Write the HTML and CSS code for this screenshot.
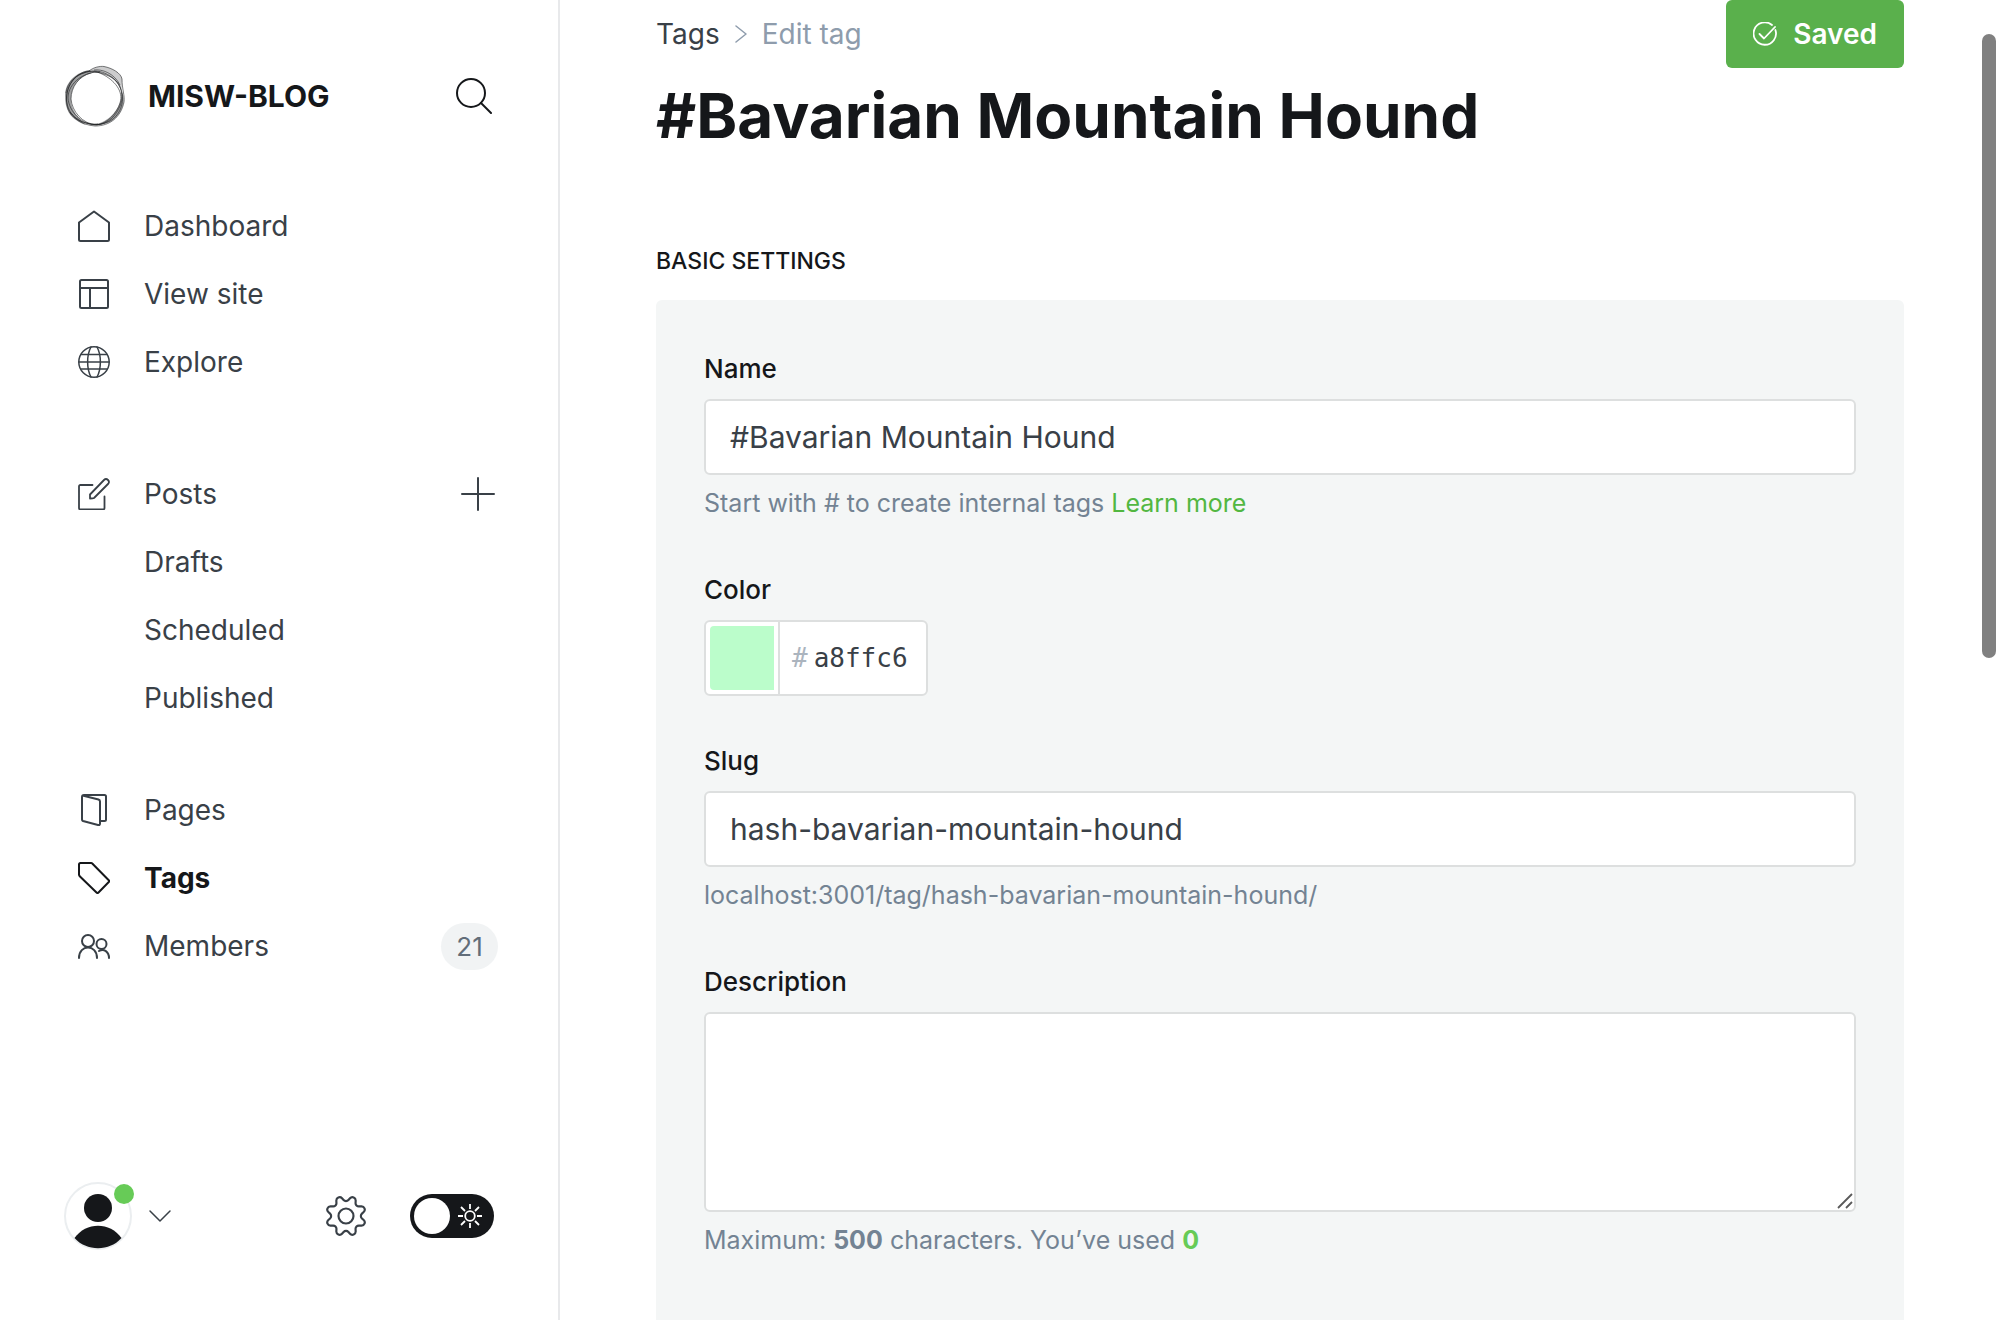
FILE: index.html
```html
<!DOCTYPE html>
<html lang="en">
<head>
<meta charset="utf-8">
<meta name="viewport" content="width=device-width, initial-scale=1">
<title>Edit tag - MISW-BLOG</title>
<link rel="stylesheet" href="styles.css">
</head>
<body>
<div class="app">
  <aside class="sidebar">
    <header class="brand">
      <svg class="brand-logo" viewBox="0 0 62 62" fill="none" stroke="#15171a" aria-hidden="true">
        <path fill="#15171a" fill-opacity=".42" stroke="none" d="M26 5C12 7 1 17 1 31C1 37 2 43 5 48C9 54 16 58 22 60C14 53 7 45 7 34C7 22 15 11 27 8Z"/>
        <path fill="#15171a" fill-opacity=".22" stroke="none" d="M25 6C30 2 36 1 40 1.500C48 3 57 8 58 14C58 19 58 23 57 26C54 16 45 10 36 8Z"/>
        <path fill="#15171a" fill-opacity=".42" stroke="none" d="M57 26C60 30 61 36 58 43C54 53 47 58 36 60L27 60C40 59 49 51 54 42C57 36 58 31 57 26Z"/>
        <g stroke-width=".7" stroke-opacity=".8">
          <path d="M25 6C30 2 36 1 40 1.500C48 3 57 8 58 14C58 24 61 31 60 37C57 52 46 61 31 61C17 60 7 52 4 44C-2 26 10 7 25 6Z"/>
          <path d="M20 8C34 2 50 10 56 22C62 34 57 50 46 56C34 63 15 59 7 48C-3 33 5 12 20 8Z"/>
          <path d="M27 8C15 11 7 22 7 34C8 46 18 59 33 60C44 58 53 48 56 38C60 26 50 15 38 9C34 7 30 6 27 8Z"/>
          <path d="M36 7C22 6 4 17 4 33C5 47 18 59 31 60C46 59 52 50 56 41C60 32 58 18 47 12C41 9 30 5 22 7"/>
          <path d="M30 5C38 4 50 8 56 20M2 28C3 18 11 10 22 7M6 47C12 56 23 60 34 59"/>
        </g>
      </svg>
      <span class="brand-name">MISW-BLOG</span>
      <button class="icon-button" type="button" aria-label="Search">
        <svg width="36" height="36" viewBox="0 0 36 36" fill="none" stroke="#15171a" stroke-width="2" stroke-linecap="round"><circle cx="15" cy="15" r="14"/><path d="M25 25L35 35"/></svg>
      </button>
    </header>

    <nav class="nav">
      <ul class="nav-group">
        <li class="nav-row"><a class="nav-link" href="#dashboard">
          <svg class="nav-icon" viewBox="0 0 32 32"><path d="M16 1.500L31 12.500V29.500Q31 31 29.500 31H2.500Q1 31 1 29.500V12.500Z"/></svg>Dashboard</a></li>
        <li class="nav-row"><a class="nav-link" href="#site">
          <svg class="nav-icon" viewBox="0 0 32 32"><rect x="2" y="2" width="28" height="28" rx="1.500"/><path d="M2 10H30M12 10V30"/></svg>View site</a></li>
        <li class="nav-row"><a class="nav-link" href="#explore">
          <svg class="nav-icon nav-icon-fine" viewBox="0 0 32 32"><circle cx="16" cy="16" r="15.200"/><path d="M1 16H31M3 8.500H29M3 23H29M13 1C8.500 9 8.500 23 13 31M19 1C23.500 9 23.500 23 19 31"/></svg>Explore</a></li>
      </ul>
      <ul class="nav-group nav-posts">
        <li class="nav-row"><a class="nav-link" href="#posts">
          <svg class="nav-icon nav-icon-pen" viewBox="0 0 32 32"><path d="M14.500 7H2.500Q1 7 1 8.500V30Q1 31.500 2.500 31.500H25Q26.500 31.500 26.500 30V18.500M12 20.500V16.500L26 2Q28 0 30 2T30 6L16 20Q15 20.500 12 20.500Z"/></svg>Posts</a>
          <button class="icon-button" type="button" aria-label="New post">
            <svg width="34" height="34" viewBox="0 0 34 34" fill="none" stroke="#394047" stroke-width="2" stroke-linecap="round"><path d="M17 1V33M1 17H33"/></svg>
          </button></li>
        <li class="nav-row"><a class="nav-link nav-sub" href="#drafts">Drafts</a></li>
        <li class="nav-row"><a class="nav-link nav-sub" href="#scheduled">Scheduled</a></li>
        <li class="nav-row"><a class="nav-link nav-sub" href="#published">Published</a></li>
      </ul>
      <ul class="nav-group nav-manage">
        <li class="nav-row"><a class="nav-link" href="#pages">
          <svg class="nav-icon" viewBox="0 0 32 32"><path d="M4.500 1.500L20.500 5.500Q22 6 22 7.500V29.500Q22 31.500 20 31L5 27Q4 26.500 4 25.500V3Q4 1 6 1H26.500Q28 1 28 2.500V25.500Q28 27 26.500 27H22"/></svg>Pages</a></li>
        <li class="nav-row"><a class="nav-link nav-active" href="#tags" aria-current="page">
          <svg class="nav-icon" viewBox="0 0 32 32"><path d="M2.500 1H13Q14 1 14.500 1.800L31 18.500Q31.500 19 31 19.800L20.500 30.500Q19.500 31.500 18.500 30.500L2 14.500Q1 13.500 1 12.500V2.500Q1 1 2.500 1Z"/></svg>Tags</a></li>
        <li class="nav-row"><a class="nav-link" href="#members">
          <svg class="nav-icon" viewBox="0 0 32 32"><circle cx="10" cy="11" r="6"/><path d="M1 28C1 14 19 14 19 28M21 21C26 18 31 22 31 28"/><circle cx="23.500" cy="14" r="5"/></svg>Members</a>
          <span class="badge">21</span></li>
      </ul>
    </nav>

    <footer class="sidebar-footer">
      <button class="user-menu" type="button" aria-label="Account menu">
        <span class="avatar">
          <svg width="68" height="68" viewBox="0 0 68 68" aria-hidden="true"><circle cx="34" cy="34" r="33" fill="#fff" stroke="#ebeef0" stroke-width="2"/><circle cx="34" cy="26" r="14" fill="#15171a"/><path fill="#15171a" d="M10.500 56C22 39.500 46 39.500 57.500 56C46 69.500 22 69.500 10.500 56Z"/></svg>
          <span class="avatar-dot"></span>
        </span>
        <svg width="24" height="14" viewBox="0 0 24 14" fill="none" stroke="#394047" stroke-width="1.500" stroke-linecap="round" stroke-linejoin="round" aria-hidden="true"><path d="M2 2L12 12L22 2"/></svg>
      </button>
      <a class="settings" href="#settings" aria-label="Settings">
        <svg width="40" height="40" viewBox="0 0 24 24" fill="none" stroke="#394047" stroke-width="1.300" stroke-linecap="round" stroke-linejoin="round"><path d="M10.546 2.438a1.957 1.957 0 0 0 2.908 0L14.400 1.400a1.959 1.959 0 0 1 3.410 1.413l-.071 1.400A1.958 1.958 0 0 0 19.790 6.270l1.400-.071a1.959 1.959 0 0 1 1.413 3.410l-1.042.94a1.960 1.960 0 0 0 0 2.909l1.042.94a1.959 1.959 0 0 1-1.413 3.410l-1.400-.071a1.958 1.958 0 0 0-2.056 2.056l.071 1.400A1.959 1.959 0 0 1 14.400 22.600l-.941-1.041a1.959 1.959 0 0 0-2.908 0L9.606 22.600A1.959 1.959 0 0 1 6.200 21.192l.072-1.400a1.958 1.958 0 0 0-2.056-2.056l-1.400.071A1.958 1.958 0 0 1 1.400 14.400l1.041-.94a1.960 1.960 0 0 0 0-2.909L1.400 9.606A1.958 1.958 0 0 1 2.809 6.200l1.400.071A1.958 1.958 0 0 0 6.264 4.210L6.200 2.810A1.959 1.959 0 0 1 9.606 1.400z"/><circle cx="12" cy="12" r="4.500"/></svg>
      </a>
      <label class="theme-toggle">
        <input class="theme-input" type="checkbox" aria-label="Dark mode">
        <svg class="theme-sun" viewBox="0 0 24 24" fill="none" stroke="#fff" stroke-width="1.800" aria-hidden="true"><circle cx="12" cy="12" r="4.800"/><path d="M12 0V5M12 19V24M0 12H5M19 12H24M3 3L7 7M17 17L21 21M21 3L17 7M7 17L3 21"/></svg>
      </label>
    </footer>
  </aside>

  <main class="main">
    <header class="page-header">
      <div class="heading">
        <nav class="breadcrumb" aria-label="Breadcrumb">
          <a class="crumb" href="#tags">Tags</a>
          <svg width="12" height="18" viewBox="0 0 12 18" fill="none" stroke="#8e9cac" stroke-width="1.500" stroke-linecap="round" stroke-linejoin="round" aria-hidden="true"><path d="M1 1L11 9L1 17"/></svg>
          <span class="crumb-current">Edit tag</span>
        </nav>
        <h1 class="title">#Bavarian Mountain Hound</h1>
      </div>
      <button class="save" type="button">
        <svg width="24" height="24" viewBox="0 0 24 24" fill="none" stroke="#fff" stroke-width="1.800" stroke-linecap="round" stroke-linejoin="round" aria-hidden="true"><path d="M19 3A11.200 11.200 0 1 0 22.400 8M22 5L11 16.500L6.500 12"/></svg>
        Saved
      </button>
    </header>

    <h2 class="section-title">Basic settings</h2>
    <form class="panel">
      <div class="field">
        <label class="label" for="tag-name">Name</label>
        <input class="input" id="tag-name" type="text" value="#Bavarian Mountain Hound">
        <p class="help">Start with # to create internal tags <a class="help-link" href="#learn">Learn more</a></p>
      </div>
      <div class="field">
        <label class="label" for="tag-color">Color</label>
        <div class="color">
          <input class="color-swatch" type="color" value="#bbfdcb" aria-label="Pick a color">
          <span class="color-hash">#</span>
          <input class="color-code" id="tag-color" type="text" value="a8ffc6" maxlength="6">
        </div>
      </div>
      <div class="field">
        <label class="label" for="tag-slug">Slug</label>
        <input class="input" id="tag-slug" type="text" value="hash-bavarian-mountain-hound">
        <p class="help">localhost:3001/tag/hash-bavarian-mountain-hound/</p>
      </div>
      <div class="field">
        <label class="label" for="tag-description">Description</label>
        <div class="textarea-wrap">
          <textarea class="input textarea" id="tag-description"></textarea>
          <svg class="grip" viewBox="0 0 16 16" fill="none" stroke="#5a5a5a" stroke-width="1.800" aria-hidden="true"><path d="M1 15L15 1M9 15L15 9"/></svg>
        </div>
        <p class="help">Maximum: <b>500</b> characters. You’ve used <b class="count">0</b></p>
      </div>
    </form>
    <div class="scroll-thumb"></div>
  </main>
</div>
</body>
</html>
```
FILE: styles.css
```css
* { box-sizing: border-box; }

body {
  margin: 0;
  background: #fff;
  color: #15171a;
  font-family: Inter, "Liberation Sans", sans-serif;
  font-size: 28px;
}

button, input, textarea { font: inherit; color: inherit; }
button { padding: 0; border: 0; background: none; cursor: pointer; }
a { color: inherit; text-decoration: none; }
svg { display: block; flex: none; }

.app { display: flex; height: 100vh; overflow: hidden; }

/* Sidebar */
.sidebar {
  display: flex;
  flex-direction: column;
  flex: none;
  width: 560px;
  padding: 64px 64px 70px;
  border-right: 2px solid #e8e9eb;
}

.brand { display: flex; align-items: center; height: 64px; padding-right: 2px; }
.brand-logo { width: 62px; height: 62px; margin-right: 22px; }
.brand-name { flex: 1; font-size: 30px; font-weight: 700; }
.icon-button { display: flex; }

.nav { flex: 1; margin-top: 64px; }
.nav-group { margin: 0; padding: 0; list-style: none; }
.nav-posts { margin-top: 64px; }
.nav-manage { margin-top: 44px; }
.nav-row { display: flex; align-items: center; justify-content: space-between; height: 68px; }
.nav-link { display: flex; align-items: center; flex: 1; padding-left: 14px; gap: 34px; color: #394047; }
.nav-row .icon-button { margin-right: -1px; }
.nav-sub { padding-left: 80px; }
.nav-active { color: #15171a; font-weight: 700; }
.nav-icon { width: 32px; height: 32px; fill: none; stroke: currentColor; stroke-width: 2; stroke-linejoin: round; stroke-linecap: round; }
.nav-icon-fine { stroke-width: 1.5; }
.nav-icon-pen { stroke-width: 1.8; }
.badge {
  width: 57px;
  margin-right: -4px;
  border-radius: 24px;
  background: #f1f3f4;
  color: #626d79;
  font-size: 26px;
  line-height: 47px;
  text-align: center;
}

.sidebar-footer { display: flex; align-items: center; height: 68px; }
.user-menu { display: flex; align-items: center; gap: 16px; }
.avatar { position: relative; }
.avatar-dot { position: absolute; top: 2px; right: -2px; width: 20px; height: 20px; border-radius: 50%; background: #67cb57; }
.settings { margin-left: auto; margin-right: 44px; }
.theme-toggle { position: relative; display: flex; }
.theme-input { width: 84px; height: 44px; margin: 0; padding: 4px; border-radius: 22px; background: #15171a; appearance: none; cursor: pointer; }
.theme-input::before { content: ""; display: block; width: 36px; height: 36px; border-radius: 50%; background: #fff; }
.theme-sun { position: absolute; top: 10px; right: 12px; width: 24px; height: 24px; }

/* Page */
.main { position: relative; display: flex; flex: 1; flex-direction: column; min-width: 0; padding: 0 96px; }
.page-header { display: flex; align-items: flex-start; justify-content: space-between; }
.breadcrumb { display: flex; align-items: center; gap: 15px; height: 68px; color: #8e9cac; }
.crumb { color: #394047; }
.title { margin: 8px 0 0; font-size: 62px; font-weight: 700; line-height: 80px; }
.save {
  display: flex;
  align-items: center;
  gap: 16px;
  height: 68px;
  padding: 0 27px;
  border-radius: 6px;
  background: #5ab04c;
  color: #fff;
  font-weight: 600;
}
.section-title { margin: 88px 0 22px; font-size: 23px; font-weight: 500; line-height: 34px; text-transform: uppercase; }

.panel { display: flex; flex: 1; flex-direction: column; gap: 47px; padding: 51px 48px; border-radius: 6px 6px 0 0; background: #f4f6f6; }
.label { display: block; width: fit-content; margin-bottom: 12px; font-size: 26px; font-weight: 500; line-height: 36px; }
.input {
  display: block;
  width: 100%;
  height: 76px;
  padding: 0 24px;
  border: 2px solid #dddfdf;
  border-radius: 6px;
  background: #fff;
  color: #394047;
  font-size: 30px;
}
.help { margin: 10px 0 4px; color: #738393; font-size: 25px; line-height: 36px; }
.help-link { color: #52b741; }
.count { color: #67cb57; }

.color { display: flex; align-items: center; width: 224px; height: 76px; border: 2px solid #dddfdf; border-radius: 6px; background: #fff; color: #394047; font-family: "DejaVu Sans Mono", monospace; font-size: 26px; }
.color-swatch { width: 74px; height: 72px; padding: 4px; border: 0; border-right: 2px solid #dddfdf; background: none; appearance: none; }
.color-swatch::-webkit-color-swatch-wrapper { padding: 0; }
.color-swatch::-webkit-color-swatch { border: 0; border-radius: 4px 0 0 4px; }
.color-hash { margin: 0 6px 0 12px; color: #abb4be; }
.color-code { flex: 1; width: 0; padding: 0; border: 0; background: none; }

.textarea-wrap { position: relative; }
.textarea { height: 200px; padding: 16px 24px; resize: none; }
.grip { position: absolute; right: 3px; bottom: 3px; width: 16px; height: 16px; }

.scroll-thumb { position: absolute; top: 34px; right: 4px; width: 14px; height: 624px; border-radius: 7px; background: #808080; }
```
